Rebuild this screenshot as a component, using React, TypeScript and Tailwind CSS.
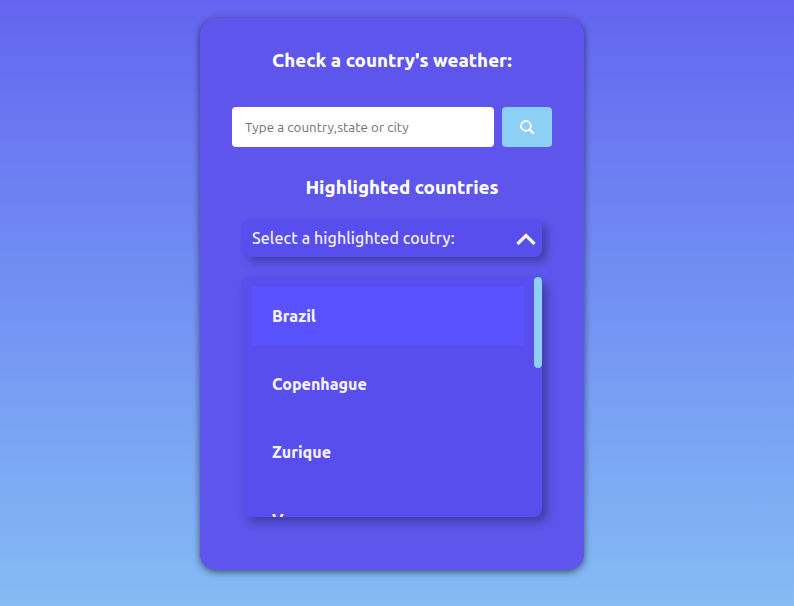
import React from "react";

const countries = ["Brazil", "Copenhague", "Zurique", "Vancouver"];

function SearchIcon() {
  return (
    <svg width="16" height="16" viewBox="0 0 16 16" fill="none" stroke="white" strokeWidth="1.9">
      <circle cx="6.9" cy="6.9" r="4.9" />
      <path d="M10.3 10.3 L14.7 14.6" strokeWidth="2.2" />
    </svg>
  );
}

function ChevronUp() {
  return (
    <svg className="mt-[2px]" width="20" height="14" viewBox="0 0 20 14" fill="none" stroke="#f7f7ff" strokeWidth="3.2">
      <path d="M1.4 12 L10 3.6 L18.6 12" />
    </svg>
  );
}

export default function App() {
  return (
    <div className="flex h-[606px] w-full justify-center overflow-hidden bg-linear-to-b from-[#6464f0] to-[#85bbf4] pt-[18px] pr-[10px] font-['Ubuntu','Noto_Sans',sans-serif] text-white">
      <main className="flex h-[552px] w-96 flex-col items-center rounded-2xl bg-[#5d55ec] px-8 shadow-[0_2px_7px_rgba(0,0,0,0.55)]">
        <h1 className="mt-[29px] h-[27px] whitespace-nowrap text-[18.72px] leading-[27px] font-extrabold">
          Check a country's weather:
        </h1>
        <form className="mt-[33px] flex w-full gap-2" onSubmit={(e) => e.preventDefault()}>
          <input
            className="h-10 w-[262px] rounded-[4px] bg-white px-[13px] text-[13.33px] font-[450] tracking-[0.08px] text-gray-800 outline-none placeholder:text-[#707070]"
            placeholder="Type a country,state or city"
          />
          <button aria-label="Search" className="flex h-10 w-[50px] items-center justify-center rounded-[4px] bg-[#8dd0f6]">
            <SearchIcon />
          </button>
        </form>
        <h2 className="mt-[27px] ml-5 h-[27px] whitespace-nowrap text-[18.72px] leading-[27px] font-extrabold">
          Highlighted countries
        </h2>
        <div className="mt-[18px] flex h-[38px] w-[300px] shrink-0 items-center justify-between rounded-lg bg-[#584ded] pr-[6px] pl-[10px] shadow-[5px_5px_7px_rgba(0,0,0,0.25)]">
          <span className="whitespace-nowrap text-[16px] font-[540] tracking-[0.09px] text-[#f3f2ff]">Select a highlighted coutry:</span>
          <ChevronUp />
        </div>
        <div className="relative mt-5 h-60 w-[300px] shrink-0 rounded-lg bg-[#584ded] shadow-[5px_5px_10px_rgba(0,0,0,0.3)]">
          <ul className="flex h-60 flex-col gap-[10px] overflow-hidden rounded-lg py-[10px] pr-[18px] pl-[10px]">
            {countries.map((name, i) => (
              <li
                key={name}
                className={`flex h-[58px] shrink-0 items-center px-5 text-[16px] font-extrabold text-[#f3f2ff] ${i === 0 ? "bg-[#5a52ff]" : ""}`}
              >
                {name}
              </li>
            ))}
          </ul>
          <div className="absolute top-0 right-0 h-[91px] w-2 rounded-full bg-[#8dd0f6]" />
        </div>
      </main>
    </div>
  );
}
